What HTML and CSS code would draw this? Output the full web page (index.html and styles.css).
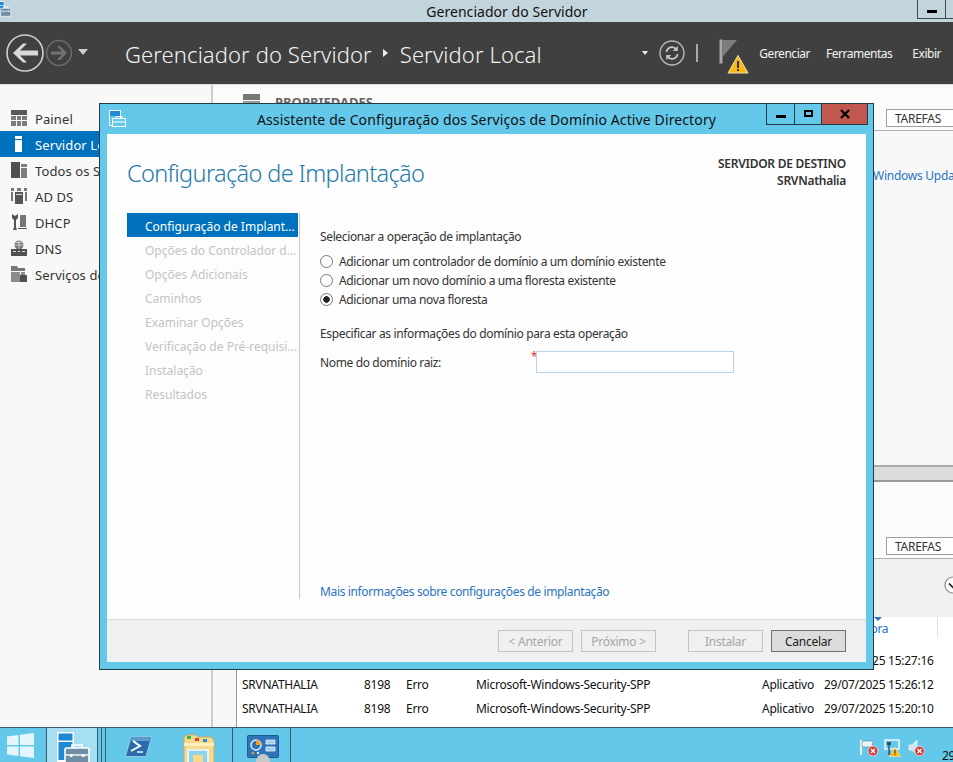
FILE: index.html
```html
<!DOCTYPE html>
<html>
<head>
  <title>Gerenciador do Servidor</title>
  <link rel="stylesheet" href="styles.css">
</head>
<body>
  <svg class="defs" width="0" height="0">
    <symbol id="smIcon" viewBox="0 0 34 40">
      <rect x="1" y="1" width="17" height="30" fill="#fff"/>
      <rect x="2.5" y="2.5" width="14" height="7" fill="#1e8ad6"/>
      <rect x="2.5" y="11" width="14" height="18" fill="#1e8ad6"/>
      <rect x="9" y="17" width="24" height="19" rx="1.5" fill="#6f8da3" stroke="#fff" stroke-width="1.6"/>
      <path d="M16 17v-3h10v3" fill="none" stroke="#fff" stroke-width="1.6"/>
      <path d="M10 24h22" stroke="#fff" stroke-width="1.4"/>
      <rect x="14" y="23" width="2.5" height="3" fill="#fff"/>
      <rect x="26" y="23" width="2.5" height="3" fill="#fff"/>
    </symbol>
  </svg>

  <div class="titlebar">
    <svg class="titleIcon"><use href="#smIcon"/></svg>
    <span>Gerenciador do Servidor</span>
    <div class="winBtns">
      <div class="winBtn"><i class="minGlyph"></i></div>
      <div class="winBtn"></div>
    </div>
  </div>

  <div class="header">
    <svg class="navBack" width="40" height="40" viewBox="0 0 40 40">
      <circle cx="20" cy="20" r="18" fill="none" stroke="#d0d0d0" stroke-width="1.6"/>
      <path d="M8 20 18 10.500h4l-7 7h18v5H15l7 7h-4z" fill="#d8d8d8"/>
    </svg>
    <svg class="navFwd" width="28" height="28" viewBox="0 0 28 28">
      <circle cx="14" cy="14" r="12.400" fill="none" stroke="#6c6c6c" stroke-width="1.500"/>
      <path d="M22 14 15 7h-3l5 5.500H6v3h11L12 21h3z" fill="#727272"/>
    </svg>
    <i class="caret navCaret"></i>
    <div class="crumb">
      <span>Gerenciador do Servidor</span>
      <i class="crumbArrow"></i>
      <span>Servidor Local</span>
    </div>
    <div class="headerRight">
      <i class="caret smallCaret"></i>
      <svg class="refresh" width="26" height="26" viewBox="0 0 26 26">
        <circle cx="13" cy="13" r="12" fill="none" stroke="#b8b8b8" stroke-width="1.400"/>
        <path d="M7.500 12a5.500 5.500 0 0 1 9.800-2.800M18.500 14a5.500 5.500 0 0 1-9.800 2.800" fill="none" stroke="#c8c8c8" stroke-width="1.800"/>
        <path d="M18.800 6v5h-5zM7.200 20v-5h5z" fill="#c8c8c8"/>
      </svg>
      <i class="headSep"></i>
      <svg class="flag" width="30" height="36" viewBox="0 0 30 36">
        <rect x="0.500" y="1.500" width="3" height="24" fill="#a8a8a8"/>
        <path d="M3.500 2H18L3.500 19z" fill="#7d7d7d"/>
        <path d="M19 17.500 29 35H9z" fill="#fcb814" stroke="#f4e3b0" stroke-width="1"/>
        <rect x="18" y="23" width="2" height="7" fill="#333"/>
        <rect x="18" y="31" width="2" height="2" fill="#333"/>
      </svg>
      <div class="menu">
        <span>Gerenciar</span>
        <span>Ferramentas</span>
        <span>Exibir</span>
      </div>
    </div>
  </div>

  <div class="main">
    <div class="sidebar">
      <div class="sideItem">
        <svg width="16" height="16" viewBox="0 0 16 16"><path d="M0 0h16v5H0z" fill="#595959"/><path d="M0 6h5v4H0zM6 6h4v4H6zM11 6h5v4h-5zM0 11h5v5H0zM6 11h4v5H6zM11 11h5v5h-5z" fill="#7d7d7d"/></svg>
        <span>Painel</span>
      </div>
      <div class="sideItem active">
        <svg width="16" height="16" viewBox="0 0 16 16"><path d="M4 0h7v3H4zM4 4h7v12H4z" fill="#fff"/></svg>
        <span>Servidor Local</span>
      </div>
      <div class="sideItem">
        <svg width="16" height="16" viewBox="0 0 16 16"><path d="M0 0h9v16H0z" fill="#4f4f4f"/><path d="M10 2h6v3h-6zM10 6h6v10h-6z" fill="#7d7d7d"/></svg>
        <span>Todos os Servidores</span>
      </div>
      <div class="sideItem">
        <svg width="16" height="16" viewBox="0 0 16 16"><path d="M0 0h3v3H0zM6 0h4v3H6zM13 0h3v3h-3zM0 4h2v9H0zM14 4h2v9h-2z" fill="#777"/><path d="M4 4h8v12H4z" fill="#555"/><path d="M5 6h6v1H5z" fill="#ddd"/></svg>
        <span>AD DS</span>
      </div>
      <div class="sideItem">
        <svg width="16" height="16" viewBox="0 0 16 16"><path d="M1 0 4 2l3-2v4L5 6v7l1 3H2l1-3V6L1 4z" fill="#555"/><path d="M9 1h6v12H9z" fill="#777"/><path d="M7 14h9v1H7z" fill="#555"/></svg>
        <span>DHCP</span>
      </div>
      <div class="sideItem">
        <svg width="16" height="16" viewBox="0 0 16 16"><circle cx="8" cy="5" r="4.500" fill="#777"/><path d="M5 2.500h6M4 5h8M8 .5v9" stroke="#eee" stroke-width=".7"/><path d="M0 9h16v7H0z" fill="#4f4f4f"/><path d="M2 11h3v1H2zM7 11h2v1H7zM11 11h3v1h-3z" fill="#ddd"/></svg>
        <span>DNS</span>
      </div>
      <div class="sideItem">
        <svg width="16" height="16" viewBox="0 0 16 16"><path d="M0 0h6l1 2h7v3H0z" fill="#777"/><path d="M0 6h9v10H0z" fill="#8c8c8c"/><path d="M10 6h4v10h-4z" fill="#8c8c8c"/><path d="M9 9h7v7H9z" fill="#4f4f4f"/></svg>
        <span>Serviços de Arquivo</span>
      </div>
    </div>

    <div class="content">
      <div class="propsPane">
        <div class="paneHead">
          <div class="propsTitle">
            <svg width="17" height="20" viewBox="0 0 17 20"><path d="M0 0h17v6H0z" fill="#777"/><path d="M0 7h17v2H0z" fill="#999"/></svg>
            <b>PROPRIEDADES</b>
          </div>
          <div class="tasksBtn">TAREFAS</div>
        </div>
        <div class="propsBody">
          <a class="updateLink">Windows Update</a>
        </div>
      </div>
      <div class="splitter"></div>
      <div class="eventsPane">
        <div class="paneHead eventsHead">
          <div class="tasksBtn">TAREFAS</div>
        </div>
        <div class="eventsBody">
          <div class="filterArea">
            <svg class="expand" width="18" height="18" viewBox="0 0 18 18">
              <circle cx="9" cy="9" r="8" fill="#fff" stroke="#8a8a8a" stroke-width="1.200"/>
              <path d="M5 7.500 9 11.500l4-4" fill="none" stroke="#333" stroke-width="1.800"/>
            </svg>
          </div>
          <div class="eventsTable">
            <div class="colHead">
              <span class="sortArrow"></span>
              <span class="colDate">Data e Hora</span>
              <i class="colSep"></i>
            </div>
            <div class="row"><span>SRVNATHALIA</span><span>8198</span><span>Erro</span><span>Microsoft-Windows-Security-SPP</span><span>Aplicativo</span><span>29/07/2025 15:27:16</span></div>
            <div class="row"><span>SRVNATHALIA</span><span>8198</span><span>Erro</span><span>Microsoft-Windows-Security-SPP</span><span>Aplicativo</span><span>29/07/2025 15:26:12</span></div>
            <div class="row"><span>SRVNATHALIA</span><span>8198</span><span>Erro</span><span>Microsoft-Windows-Security-SPP</span><span>Aplicativo</span><span>29/07/2025 15:20:10</span></div>
          </div>
        </div>
      </div>
    </div>
  </div>

  <div class="taskbar">
    <div class="startBtn">
      <svg width="27" height="25" viewBox="0 0 27 25"><path d="M0 3.500 11.500 2v10H0zM13 1.800 27 0v12H13zM0 13.500h11.500V23L0 21.500zM13 13.500h14V25l-14-1.800z" fill="#e4f5fb"/></svg>
    </div>
    <div class="taskBtn smBtn">
      <svg width="34" height="40"><use href="#smIcon"/></svg>
    </div>
    <i class="stackEdge"></i>
    <i class="stackEdge"></i>
    <div class="taskGroup">
      <svg class="psIcon" width="27" height="21" viewBox="0 0 27 21">
        <path d="M6 1h20.500L21 20.500H.5z" fill="#2a6bab" stroke="#a9cfe8" stroke-width=".8"/>
        <path d="M7 2h18l-1 3H6z" fill="#5f9dd0"/>
        <path d="M8 5l7 5-9 5" fill="none" stroke="#fff" stroke-width="2"/>
        <path d="M12 16h6" stroke="#e4f0f8" stroke-width="1.600"/>
      </svg>
      <svg class="folderIcon" width="32" height="30" viewBox="0 0 32 30">
        <path d="M1 3 4 1h9l2 2h13l3 3v24H1z" fill="#f6d98a" stroke="#c9a864"/>
        <path d="M4 2h4v3H4z" fill="#37b24d"/>
        <path d="M12 4h4v3h-4z" fill="#d8432e"/>
        <path d="M20 5h4v3h-4z" fill="#2b8fd8"/>
        <path d="M1 9h30v3H1z" fill="#fdf0c0"/>
        <path d="M5 16h20v14H5z" fill="#8fd3ea" stroke="#dff3fa" stroke-width="2"/>
        <path d="M10 21h10v9H10z" fill="#f6d98a"/>
      </svg>
    </div>
    <div class="taskBtn eventBtn">
      <svg width="32" height="34" viewBox="0 0 32 34">
        <rect x="0.500" y="0.500" width="31" height="22" rx="1" fill="#2f74b8" stroke="#1d5a94"/>
        <circle cx="9" cy="10" r="5" fill="none" stroke="#dbeefa" stroke-width="1.500"/>
        <path d="M9 5a5 5 0 0 1 5 5H9z" fill="#f39c1f"/>
        <path d="M19 5h9v4h-9zM19 12h9v4h-9z" fill="#9fd0f0" stroke="#e8f5fc" stroke-width=".8"/>
        <circle cx="6" cy="18" r="1.200" fill="#f39c1f"/>
        <circle cx="11" cy="18" r="1.200" fill="#dbeefa"/>
        <ellipse cx="16" cy="27" rx="7" ry="8" fill="#c9c9c9"/>
      </svg>
    </div>
    <div class="tray">
      <svg class="trayFlag" width="19" height="18" viewBox="0 0 19 18">
        <path d="M1 1v15" stroke="#e8f5fb" stroke-width="2"/>
        <path d="M2 2h12l-2 3 2 3H2z" fill="#e8f5fb" stroke="#5a7a8a" stroke-width=".6"/>
        <circle cx="13" cy="12" r="5" fill="#d23b3b" stroke="#f6dede" stroke-width=".8"/>
        <path d="M11 10l4 4m0-4-4 4" stroke="#fff" stroke-width="1.400"/>
      </svg>
      <svg width="17" height="18" viewBox="0 0 17 18">
        <path d="M1 1h14v9H1z" fill="none" stroke="#e8f5fb" stroke-width="1.600"/>
        <path d="M3 3h4v3H3z" fill="#36505e"/>
        <path d="M5 6v9h4" fill="none" stroke="#36505e" stroke-width="1.400"/>
        <path d="M11 8l5.500 9.500h-11z" fill="#fcb814" stroke="#fff2c4" stroke-width=".6"/>
        <path d="M10.500 11h1v3.500h-1zM10.500 15.200h1v1h-1z" fill="#333"/>
      </svg>
      <svg width="17" height="18" viewBox="0 0 17 18">
        <path d="M1 6h3l5-5v15l-5-5H1z" fill="#cfe6ef" stroke="#e8f5fb" stroke-width=".8"/>
        <circle cx="11.500" cy="12" r="4.800" fill="#d23b3b" stroke="#f6dede" stroke-width=".8"/>
        <path d="M9.500 10l4 4m0-4-4 4" stroke="#fff" stroke-width="1.400"/>
      </svg>
      <span class="clock">29/07/2025</span>
    </div>
  </div>

  <!-- janela do assistente -->
  <div class="dialog">
    <div class="dlgTitle">
      <svg class="dlgIcon" width="17" height="17" viewBox="0 0 17 17">
        <rect x="0.500" y="0.500" width="11" height="15" fill="#63c8ea" stroke="#fff"/>
        <rect x="1" y="1" width="10" height="5" fill="#1e8ad6"/>
        <rect x="3.500" y="8.500" width="13" height="8" fill="#63c8ea" stroke="#fff"/>
        <path d="M7 8.500v-2h6v2M4 12h12" fill="none" stroke="#fff"/>
      </svg>
      <span class="dlgCaption">Assistente de Configuração dos Serviços de Domínio Active Directory</span>
      <div class="dlgBtns">
        <div class="dlgBtn"><i class="minGlyph"></i></div>
        <div class="dlgBtn"><i class="maxGlyph"></i></div>
        <div class="dlgBtn closeBtn">
          <svg width="12" height="10" viewBox="0 0 12 10"><path d="M2 1l8 8m0-8-8 8" stroke="#000" stroke-width="2.200"/></svg>
        </div>
      </div>
    </div>
    <div class="dlgBody">
      <div class="dlgHead">
        <h1>Configuração de Implantação</h1>
        <div class="target">
          <div>SERVIDOR DE DESTINO</div>
          <div>SRVNathalia</div>
        </div>
      </div>
      <div class="dlgMiddle">
        <div class="steps">
          <div class="step current">Configuração de Implant...</div>
          <div class="step">Opções do Controlador d...</div>
          <div class="step">Opções Adicionais</div>
          <div class="step">Caminhos</div>
          <div class="step">Examinar Opções</div>
          <div class="step">Verificação de Pré-requisi...</div>
          <div class="step">Instalação</div>
          <div class="step">Resultados</div>
        </div>
        <div class="pane">
          <div class="opLabel">Selecionar a operação de implantação</div>
          <div class="radios">
            <label class="radio"><i class="dot"></i>Adicionar um controlador de domínio a um domínio existente</label>
            <label class="radio"><i class="dot"></i>Adicionar um novo domínio a uma floresta existente</label>
            <label class="radio"><i class="dot on"></i>Adicionar uma nova floresta</label>
          </div>
          <div class="infoLabel">Especificar as informações do domínio para esta operação</div>
          <div class="domainRow">
            <span class="domainLabel">Nome do domínio raiz:</span>
            <span class="star">*</span>
            <div class="domainInput"></div>
          </div>
          <a class="moreLink">Mais informações sobre configurações de implantação</a>
        </div>
      </div>
      <div class="dlgFooter">
        <div class="btn off">&lt; Anterior</div>
        <div class="btn off">Próximo &gt;</div>
        <div class="btn off installBtn">Instalar</div>
        <div class="btn cancelBtn">Cancelar</div>
      </div>
    </div>
  </div>
</body>
</html>
```

FILE: styles.css
```css
html, body {
  height: 100%;
}
body {
  margin: 0;
  position: relative;
  width: 953px;
  height: 762px;
  overflow: hidden;
  display: flex;
  flex-direction: column;
  font-family: "Noto Sans", "Open Sans", sans-serif;
  font-size: 12px;
  letter-spacing: -0.26px;
  color: #222;
  background: #f8f8f8;
}
i {
  display: block;
  font-style: normal;
}
.defs {
  position: absolute;
}

/* barra de titulo */
.titlebar {
  height: 22px;
  flex: none;
  box-sizing: border-box;
  display: flex;
  align-items: center;
  justify-content: center;
  position: relative;
  padding-left: 61px;
  background: #c3d5dc;
  font-size: 14px;
  letter-spacing: 0.04px;
  color: #111;
}
.titleIcon {
  position: absolute;
  left: -5px;
  top: 1px;
  width: 18px;
  height: 17px;
}
.winBtns {
  position: absolute;
  right: -20px;
  top: 0;
  display: flex;
}
.winBtn {
  width: 29px;
  height: 19px;
  box-sizing: border-box;
  border: 1px solid #3c4c55;
  border-top: none;
  margin-right: -1px;
  display: flex;
  align-items: center;
  justify-content: center;
}
.minGlyph {
  width: 10px;
  height: 3px;
  margin-top: 5px;
  background: #000;
}
.maxGlyph {
  width: 9px;
  height: 7px;
  box-sizing: border-box;
  border: 2px solid #000;
  margin-top: -2px;
}

/* cabecalho */
.header {
  height: 63px;
  flex: none;
  box-sizing: border-box;
  display: flex;
  align-items: center;
  background: #404040;
  border-bottom: 1px solid #ddd;
  color: #fff;
}
.navBack {
  margin-left: 5px;
}
.caret {
  width: 0;
  height: 0;
  border-style: solid;
  border-color: #ccc transparent transparent;
}
.navCaret {
  border-width: 6px 5px 0;
  margin-left: 5px;
  margin-top: -2px;
}
.crumb {
  display: flex;
  align-items: center;
  margin: 2px 0 0 37px;
  font-size: 22px;
  letter-spacing: 0.1px;
  font-weight: 300;
  color: #f2f2f2;
}
.crumbArrow {
  width: 0;
  height: 0;
  margin: -2px 12px 0 11px;
  border-style: solid;
  border-width: 4px 0 4px 5px;
  border-color: transparent transparent transparent #eee;
}
.headerRight {
  margin-left: auto;
  display: flex;
  align-items: center;
}
.smallCaret {
  border-width: 4px 3px 0;
  border-top-color: #eee;
  margin-right: 11px;
}
.headSep {
  width: 2px;
  height: 18px;
  margin: 0 21px 0 11px;
  background: #aaa;
}
.flag {
  margin-top: 5px;
}
.menu {
  display: flex;
  gap: 16px;
  margin-left: 10px;
  padding-right: 12px;
  letter-spacing: -0.48px;
  color: #f4f4f4;
}
.menu span:last-child {
  margin-left: 4px;
}

/* area principal */
.main {
  flex: 1;
  display: flex;
  min-height: 0;
}
.sidebar {
  width: 213px;
  flex: none;
  box-sizing: border-box;
  padding-top: 20px;
  background: #f8f8f8;
  border-right: 2px solid #ccc;
  font-size: 13px;
  letter-spacing: 0.1px;
}
.sideItem {
  height: 26px;
  display: flex;
  align-items: center;
  gap: 8px;
  padding-left: 11px;
  white-space: nowrap;
  color: #333;
}
.sideItem span {
  margin-top: 2px;
}
.sideItem.active {
  background: #0071bc;
  color: #fff;
}
.content {
  flex: 1;
  min-width: 0;
  display: flex;
  flex-direction: column;
}
.propsPane {
  height: 380px;
  flex: none;
  display: flex;
  flex-direction: column;
}
.paneHead {
  display: flex;
  align-items: flex-end;
  height: 46px;
  flex: none;
  box-sizing: border-box;
  border-bottom: 1px solid #b0b0b0;
  padding-bottom: 3px;
  background: #fbfbfb;
}
.propsTitle {
  display: flex;
  align-items: flex-start;
  align-self: flex-start;
  gap: 15px;
  margin: 9px 0 0 30px;
  color: #666;
}
.propsTitle b {
  margin-top: -1px;
  font-size: 13px;
  letter-spacing: 0;
}
.tasksBtn {
  margin-left: auto;
  margin-right: -13px;
  width: 80px;
  height: 18px;
  box-sizing: border-box;
  border: 1px solid #a0a0a0;
  background: #fff;
  padding-left: 8px;
  line-height: 18px;
  color: #333;
}
.propsBody {
  flex: 1;
  background: #f8f8f8;
  padding-top: 36px;
}
.updateLink {
  display: block;
  margin-left: 660px;
  white-space: nowrap;
  color: #2a74c0;
}
.splitter {
  height: 17px;
  flex: none;
  box-sizing: border-box;
  background: #dcdcdc;
  border-top: 2px solid #aaa;
  border-bottom: 2px solid #999;
}
.eventsPane {
  flex: 1;
  min-height: 0;
  display: flex;
  flex-direction: column;
}
.eventsHead {
  height: 77px;
}
.eventsBody {
  flex: 1;
  min-height: 0;
  display: flex;
  flex-direction: column;
  margin-left: 23px;
  border-left: 1px solid #999;
  background: #fff;
}
.filterArea {
  height: 58px;
  flex: none;
  position: relative;
  background: #f0f0f0;
}
.expand {
  position: absolute;
  right: -9px;
  top: 17px;
}
.eventsTable {
  flex: 1;
}
.colHead {
  height: 32px;
  position: relative;
  color: #2a74c0;
  box-sizing: border-box;
  padding: 3px 0 0 587px;
}
.sortArrow {
  position: absolute;
  left: 637px;
  top: 0;
  border-style: solid;
  border-width: 4px 4px 0;
  border-color: #2a74c0 transparent transparent;
}
.colSep {
  position: absolute;
  left: 700px;
  top: 0;
  width: 1px;
  height: 20px;
  background: #ddd;
}
.row {
  display: grid;
  grid-template-columns: 122px 42px 70px 286px 62px 1fr;
  height: 24px;
  line-height: 24px;
  padding-left: 5px;
  white-space: nowrap;
  color: #111;
}

/* barra de tarefas */
.taskbar {
  height: 35px;
  flex: none;
  box-sizing: border-box;
  display: flex;
  overflow: hidden;
  background: #63c8ea;
  border-top: 1px solid #3e5a68;
}
.startBtn {
  width: 46px;
  flex: none;
  box-sizing: border-box;
  padding: 5px 0 0 7px;
}
.taskBtn {
  flex: none;
  box-sizing: border-box;
  border-left: 1px solid #3e5a68;
}
.smBtn {
  width: 51px;
  background: #a6def3;
  padding: 3px 0 0 9px;
}
.stackEdge {
  width: 3px;
  flex: none;
  border-left: 1px solid #3e5a68;
}
.taskGroup {
  width: 127px;
  flex: none;
  box-sizing: border-box;
  display: flex;
  gap: 31px;
  border-left: 1px solid #3e5a68;
  padding: 8px 0 0 19px;
}
.psIcon {
  flex: none;
}
.folderIcon {
  flex: none;
  margin-top: -2px;
}
.eventBtn {
  width: 59px;
  padding: 7px 0 0 14px;
  border-right: 1px solid #3e5a68;
}
.tray {
  flex: none;
  margin-left: 569px;
  display: flex;
  gap: 7px;
  padding-top: 11px;
}
.trayFlag {
  margin-right: -2px;
}
.clock {
  margin-left: 10px;
  margin-top: 8px;
  color: #111;
  white-space: nowrap;
}

/* dialogo */
.dialog {
  position: absolute;
  left: 99px;
  top: 103px;
  width: 775px;
  height: 567px;
  box-sizing: border-box;
  display: flex;
  flex-direction: column;
  padding: 0 7px 7px;
  background: #63c8ea;
  border: 1px solid #263a45;
}
.dlgTitle {
  height: 30px;
  flex: none;
  position: relative;
  display: flex;
  align-items: center;
  justify-content: center;
  font-size: 14px;
  letter-spacing: 0.12px;
  color: #111;
}
.dlgIcon {
  position: absolute;
  left: 2px;
  top: 6px;
}
.dlgCaption {
  white-space: nowrap;
}
.dlgBtns {
  position: absolute;
  right: -2px;
  top: 0;
  display: flex;
  height: 21px;
  border: 1px solid #263a45;
  border-top: none;
  box-sizing: border-box;
}
.dlgBtn {
  width: 27px;
  display: flex;
  align-items: center;
  justify-content: center;
  border-right: 1px solid #263a45;
}
.dlgBtn:nth-child(2) {
  width: 26px;
}
.closeBtn {
  width: 45px;
  border-right: none;
  background: #c0584f;
}
.dlgBody {
  flex: 1;
  min-height: 0;
  display: flex;
  flex-direction: column;
  background: #fdfdfd;
  color: #333;
}
.dlgHead {
  height: 79px;
  flex: none;
  display: flex;
  justify-content: space-between;
  padding: 0 20px;
}
.dlgHead h1 {
  margin: 23px 0 0;
  font-size: 23.5px;
  font-weight: 300;
  letter-spacing: -0.63px;
  line-height: 33px;
  color: #1e7ba8;
}
.target {
  padding-top: 21px;
  text-align: right;
  font-weight: 600;
  line-height: 17px;
  color: #333;
}
.dlgMiddle {
  flex: 1;
  min-height: 0;
  display: flex;
  padding-bottom: 20px;
}
.steps {
  width: 173px;
  flex: none;
  margin-left: 20px;
  border-right: 1px solid #c8c8c8;
  box-sizing: border-box;
}
.step {
  height: 24px;
  line-height: 28px;
  padding-left: 18px;
  white-space: nowrap;
  overflow: hidden;
  letter-spacing: 0;
  color: #c4c4c4;
}
.step.current {
  width: 171px;
  box-sizing: border-box;
  background: #0071bc;
  color: #fff;
}
.pane {
  flex: 1;
  min-width: 0;
  display: flex;
  flex-direction: column;
  padding-left: 20px;
  letter-spacing: -0.36px;
  color: #333;
}
.opLabel {
  margin-top: 15px;
  line-height: 18px;
}
.radios {
  display: flex;
  flex-direction: column;
  margin-top: 5.5px;
}
.radio {
  display: flex;
  align-items: center;
  gap: 6px;
  height: 19.5px;
}
.radio:last-child {
  margin-top: -0.5px;
}
.dot {
  width: 13px;
  height: 13px;
  box-sizing: border-box;
  flex: none;
  border: 1px solid #777;
  border-radius: 50%;
  background: #fff;
}
.dot.on {
  background: radial-gradient(circle, #222 0 3px, #fff 3.5px);
}
.infoLabel {
  margin-top: 15px;
  line-height: 18px;
}
.domainRow {
  display: flex;
  align-items: center;
  margin-top: 8px;
  height: 22px;
}
.domainLabel {
  width: 211px;
  flex: none;
  margin-top: 2px;
}
.star {
  width: 5px;
  flex: none;
  align-self: flex-start;
  line-height: 12px;
  color: #e33;
}
.domainInput {
  width: 198px;
  height: 22px;
  box-sizing: border-box;
  border: 1px solid #b8d4e8;
  background: #fff;
}
.moreLink {
  margin-top: auto;
  margin-bottom: -2px;
  line-height: 18px;
  color: #2a74c0;
}
.dlgFooter {
  height: 43px;
  flex: none;
  box-sizing: border-box;
  display: flex;
  align-items: flex-start;
  gap: 8px;
  padding: 10px 20px 0 0;
  justify-content: flex-end;
  background: #f0f0f0;
  border-top: 1px solid #ddd;
}
.btn {
  width: 75px;
  height: 22px;
  box-sizing: border-box;
  border: 1px solid #707070;
  text-align: center;
  line-height: 22px;
}
.btn.off {
  border-color: #c4c4c4;
  color: #a6a6a6;
}
.installBtn {
  margin-left: 24px;
}
.cancelBtn {
  background: #dcdcdc;
  color: #222;
}
```
